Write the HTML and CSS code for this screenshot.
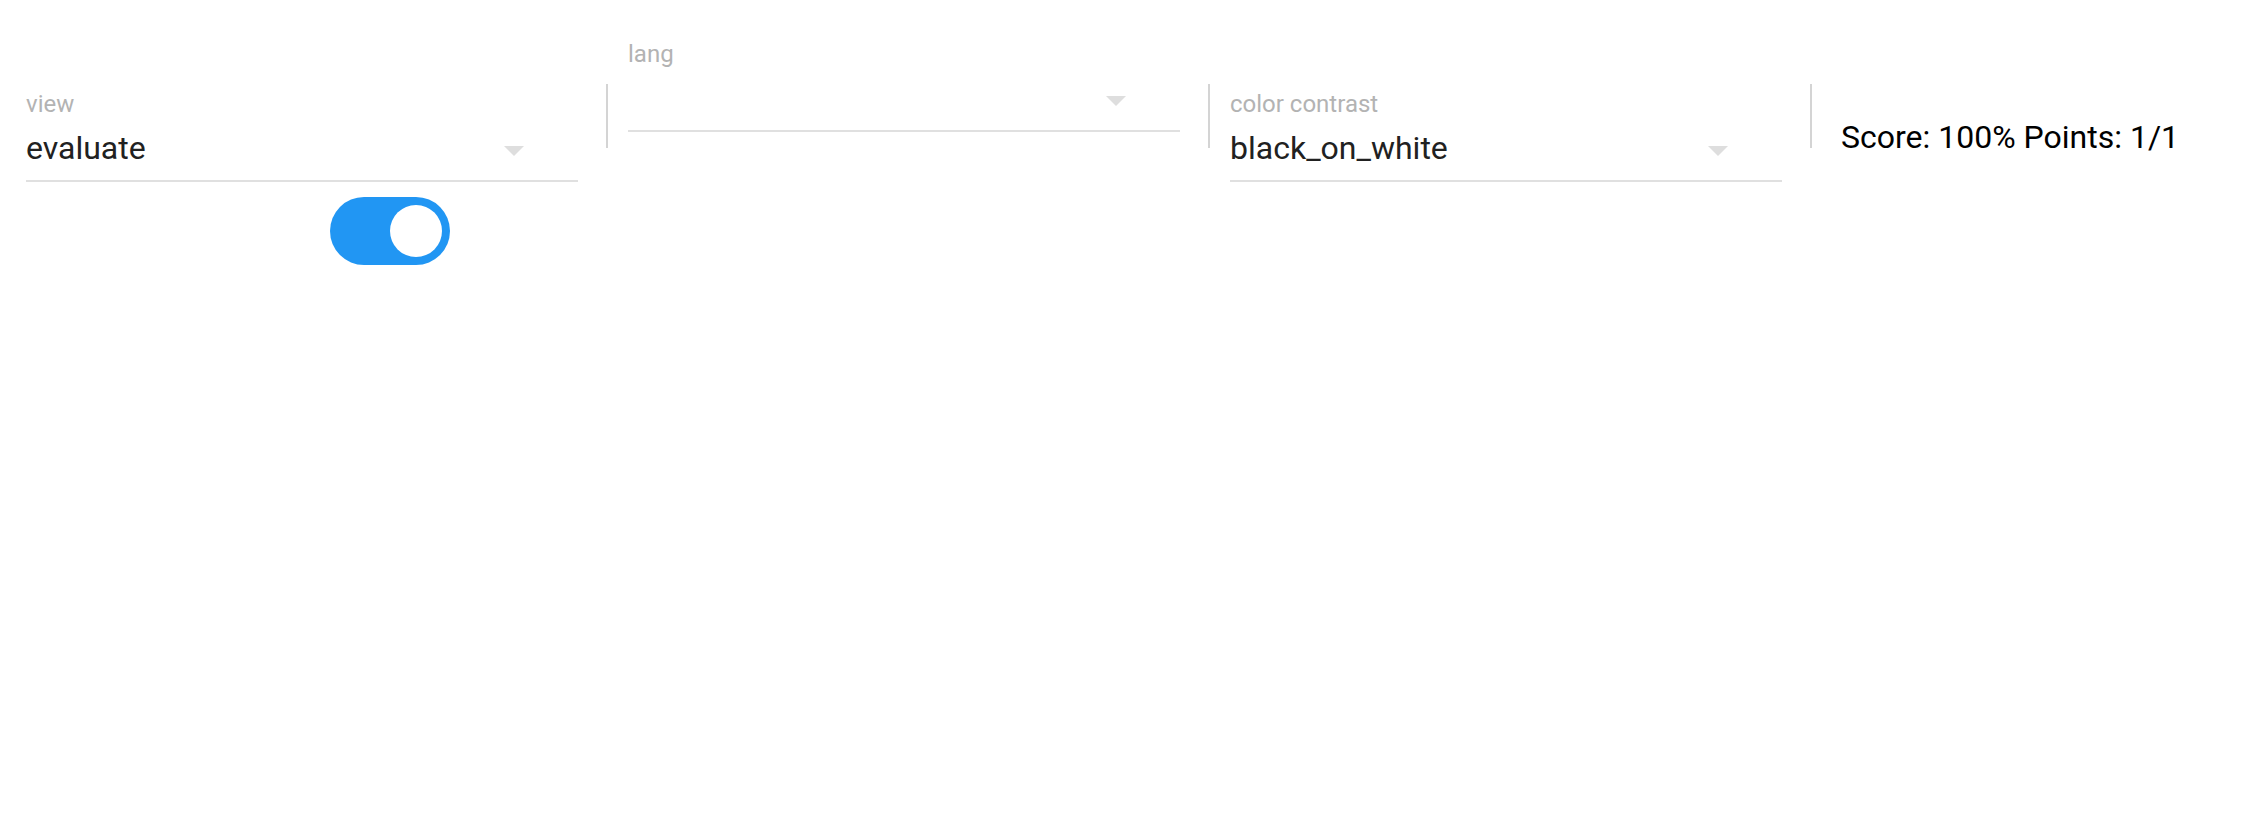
FILE: index.html
```html
<!DOCTYPE html>
<html>
<head>
<meta charset="utf-8">
<link rel="stylesheet" href="styles.css">
</head>
<body>
<div class="page">
  <div class="toolbar">
    <div class="field field-offset">
      <div class="field-label">view</div>
      <div class="field-value"><span>evaluate</span><span class="arrow"></span></div>
      <div class="underline"></div>
    </div>
    <div class="sep"></div>
    <div class="field">
      <div class="field-label">lang</div>
      <div class="field-value"><span></span><span class="arrow"></span></div>
      <div class="underline"></div>
    </div>
    <div class="sep"></div>
    <div class="field field-offset">
      <div class="field-label">color contrast</div>
      <div class="field-value"><span>black_on_white</span><span class="arrow"></span></div>
      <div class="underline"></div>
    </div>
    <div class="sep"></div>
    <div class="score">Score: 100% Points: 1/1</div>
  </div>
  <div class="toggle-row">
    <div class="toggle"><div class="knob"></div></div>
  </div>
</div>
</body>
</html>
```
FILE: styles.css
```css
html, body {
  margin: 0;
  padding: 0;
  background: #ffffff;
}
body {
  font-family: Roboto, "Liberation Sans", sans-serif;
}
.page {
  width: 2250px;
  height: 822px;
}
.toolbar {
  display: flex;
  align-items: flex-start;
  padding-top: 40px;
  padding-left: 26px;
}
.field {
  width: 552px;
  display: flex;
  flex-direction: column;
}
.field-offset {
  margin-top: 50px;
}
.field-label {
  font-size: 24px;
  line-height: 28px;
  height: 28px;
  color: #b3b3b3;
  white-space: nowrap;
}
.field-value {
  margin-top: 10px;
  height: 40px;
  line-height: 40px;
  font-size: 32px;
  color: #212121;
  display: flex;
  justify-content: space-between;
  align-items: center;
  padding-right: 54px;
}
.arrow {
  width: 0;
  height: 0;
  border-left: 10px solid transparent;
  border-right: 10px solid transparent;
  border-top: 10px solid #dedede;
  margin-top: 5px;
}
.underline {
  margin-top: 12px;
  height: 2px;
  background: #e0e0e0;
}
.sep {
  width: 2px;
  height: 64px;
  margin-top: 44px;
  margin-left: 28px;
  margin-right: 20px;
  background: #d4d4d4;
}
.score {
  margin-top: 77px;
  margin-left: 9px;
  font-size: 32px;
  line-height: 40px;
  color: #000000;
  white-space: nowrap;
}
.toggle-row {
  display: flex;
  padding-top: 15px;
  padding-left: 330px;
}
.toggle {
  width: 120px;
  height: 68px;
  border-radius: 34px;
  background: #2196f3;
  display: flex;
  align-items: center;
  justify-content: flex-end;
  padding-right: 8px;
  box-sizing: border-box;
}
.knob {
  width: 52px;
  height: 52px;
  border-radius: 50%;
  background: #ffffff;
}
```
